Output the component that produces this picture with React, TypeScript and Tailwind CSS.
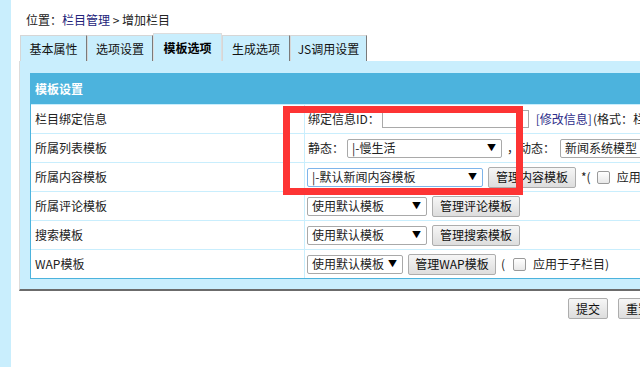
import type { ReactNode } from 'react'

const TABS = [
  { label: '基本属性', w: 'w-[67px]' },
  { label: '选项设置', w: 'w-[66px]' },
  { label: '模板选项', w: 'w-[69px]', active: true },
  { label: '生成选项', w: 'w-[68px]' },
  { label: 'JS调用设置', w: 'w-[77px]' },
]

function Select({ text, w, focused = false }: { text: string; w: string; focused?: boolean }) {
  return (
    <div
      className={[
        'flex h-[19px] items-center justify-between rounded-[2px] border bg-white pl-[4px] pr-[5px] text-[12px] text-[#222]',
        w,
        focused ? 'border-[#7eb4ea]' : 'border-[#a9a9a9]',
      ].join(' ')}
    >
      <span className="whitespace-nowrap">{text}</span>
      <span className="text-[9px] text-black">▼</span>
    </div>
  )
}

function Btn({ children, w }: { children: ReactNode; w: string }) {
  return (
    <div
      className={[
        'flex h-[21px] items-center justify-center rounded-[2px] border border-[#adadad] bg-gradient-to-b from-[#f6f6f6] to-[#dddddd] text-[12px] text-[#111] whitespace-nowrap',
        w,
      ].join(' ')}
    >
      {children}
    </div>
  )
}

function Check() {
  return <div className="h-[13px] w-[13px] rounded-[2px] border border-[#9a9a9a] bg-gradient-to-b from-white to-[#e8e8e8]" />
}

function Row({ label, children }: { label: string; children: ReactNode }) {
  return (
    <div className="grid h-[28px] grid-cols-[273px_1fr] gap-x-px bg-[#c9eefd]">
      <div className="flex items-center bg-white pl-[4px]">{label}</div>
      <div className="flex items-center gap-[5px] bg-white pl-[2px] whitespace-nowrap">{children}</div>
    </div>
  )
}

export default function App() {
  return (
    <div className="flex h-[367px] w-[640px] overflow-hidden bg-white text-[12px] leading-[16px] text-[#222] [font-family:'Noto_Sans_CJK_SC','Liberation_Sans',sans-serif]">
      {/* left frame strip */}
      <div className="h-full w-[11px] flex-none bg-[#c9eefd]" />

      <div className="w-[760px] flex-none pl-[8px]">
        {/* breadcrumb */}
        <div className="pl-[7px] pt-[12px] text-[#222]">
          位置：<span className="text-[#23237a]">栏目管理</span> &gt; 增加栏目
        </div>

        {/* tabs */}
        <div className="mt-[5px] flex items-end pl-[1px]">
          {TABS.map((t) => (
            <div
              key={t.label}
              className={[
                'flex items-center justify-center border-t border-l bg-[#c9eefd] text-[12px]',
                t.w,
                t.active
                  ? 'h-[28px] border-r border-[#dddddd] font-bold text-black'
                  : 'h-[26px] border-[#d6d6d6] border-r border-r-[#7a7a7a] text-[#111]',
              ].join(' ')}
            >
              {t.label}
            </div>
          ))}
        </div>

        {/* panel */}
        <div className="border-b-2 border-l border-b-[#6b6b6b] border-l-[#dcdcdc] bg-[#c9eefd] pb-[10px] pl-[10px] pt-[12px]">
          <div className="flex flex-col gap-y-px border border-[#4cb3dd] bg-[#c9eefd]">
            <div className="flex h-[30px] items-center bg-[#4cb3dd] pl-[4px] font-bold text-white">模板设置</div>

            <Row label="栏目绑定信息">
              <span className="ml-[1px]">绑定信息ID：</span>
              <div className="ml-[-3px] h-[18px] w-[147px] border border-[#a9a9a9] bg-white" />
              <span className="ml-[2px] text-[#2e2e8a]">[修改信息]</span>
              <span className="ml-[-4px]">(格式：栏目ID|栏目ID)</span>
            </Row>

            <Row label="所属列表模板">
              <span className="ml-[1px]">静态：</span>
              <div className="ml-[-2px]">
                <Select text="|-慢生活" w="w-[155px]" />
              </div>
              <span>，动态：</span>
              <Select text="新闻系统模型" w="w-[100px]" />
            </Row>

            <Row label="所属内容模板">
              <Select text="|-默认新闻内容模板" w="w-[176px]" focused />
              <Btn w="w-[88px]">管理内容模板</Btn>
              <span>*(</span>
              <div className="ml-[1px]"><Check /></div>
              <span className="ml-[2px]">应用于子栏目)</span>
            </Row>

            <Row label="所属评论模板">
              <Select text="使用默认模板" w="w-[120px]" />
              <Btn w="w-[88px]">管理评论模板</Btn>
            </Row>

            <Row label="搜索模板">
              <Select text="使用默认模板" w="w-[120px]" />
              <Btn w="w-[88px]">管理搜索模板</Btn>
            </Row>

            <Row label="WAP模板">
              <Select text="使用默认模板" w="w-[96px]" />
              <Btn w="w-[88px]">管理WAP模板</Btn>
              <span>(</span>
              <div className="ml-[3px]"><Check /></div>
              <span className="ml-[2px]">应用于子栏目)</span>
            </Row>
          </div>
        </div>

        {/* form buttons */}
        <div className="mt-[7px] flex gap-[10px] pl-[549px]">
          <Btn w="w-[40px]">提交</Btn>
          <Btn w="w-[40px]">重置</Btn>
        </div>
      </div>

      {/* annotation box drawn over the screenshot */}
      <div className="pointer-events-none absolute left-[283px] top-[106px] h-[89px] w-[240px] border-[7px] border-[#fd3434]" />
    </div>
  )
}
